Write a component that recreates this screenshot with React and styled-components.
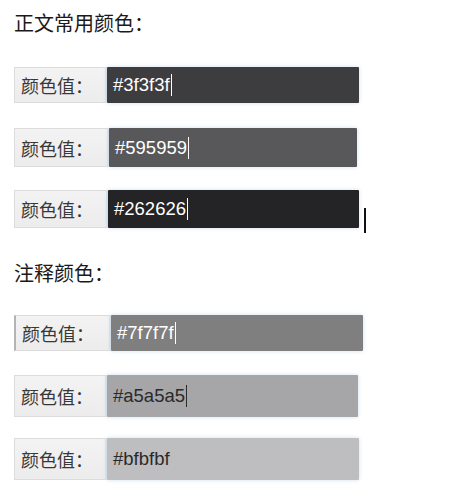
import React from "react";
import styled, { createGlobalStyle } from "styled-components";

const Global = createGlobalStyle`
  html, body { margin: 0; padding: 0; background: #ffffff; }
  body { font-family: "Noto Sans CJK SC", "Microsoft YaHei", sans-serif; }
`;

const Page = styled.div`
  width: 473px;
  height: 501px;
  padding-left: 14px;
  box-sizing: border-box;
  display: flex;
  flex-direction: column;
  overflow: hidden;
`;

const Heading = styled.h3`
  margin: ${(p) => p.$mt}px 0 0 0;
  height: 24px;
  line-height: 24px;
  font-size: 20px;
  font-weight: 400;
  color: #1a1a1a;
`;

const Row = styled.div`
  display: flex;
  align-items: stretch;
  margin-top: ${(p) => p.$mt}px;
  height: ${(p) => p.$h}px;
`;

const Label = styled.span`
  width: ${(p) => p.$w}px;
  box-sizing: border-box;
  display: flex;
  align-items: center;
  padding-left: 6px;
  background: linear-gradient(#f3f3f3, #ececec);
  border: 1px solid #dcdcdc;
  border-left: ${(p) => (p.$strong ? "2px solid #b4b4b4" : "1px solid #dcdcdc")};
  border-right: 2px solid #dfe6ee;
  font-size: 18px;
  color: #383838;
`;

const Field = styled.span`
  width: ${(p) => p.$w}px;
  box-sizing: border-box;
  display: flex;
  align-items: center;
  padding-left: 6px;
  background: ${(p) => p.$bg};
  color: ${(p) => p.$fg};
  font-family: "Liberation Sans", Arial, sans-serif;
  font-size: 18.5px;
  box-shadow: 0 0 4px rgba(150, 185, 215, 0.45);
  border-radius: 1px;
`;

const Caret = styled.span`
  display: inline-block;
  width: 1px;
  height: 22px;
  margin-left: 1px;
  background: ${(p) => p.$c};
`;

const Beam = styled.span`
  align-self: flex-end;
  width: 2px;
  height: 25px;
  margin-left: 5px;
  margin-bottom: -5px;
  background: #111111;
`;

const body = [
  { mt: 32, h: 36, lw: 93, fw: 252, bg: "#3d3d3f", fg: "#ffffff", text: "#3f3f3f", caret: "#ffffff" },
  { mt: 25, h: 39, lw: 95, fw: 248, bg: "#58585a", fg: "#ffffff", text: "#595959", caret: "#ffffff" },
  { mt: 23, h: 38, lw: 94, fw: 251, bg: "#242426", fg: "#ffffff", text: "#262626", caret: "#ffffff", beam: true },
];

const notes = [
  { mt: 30, h: 36, lw: 97, fw: 252, bg: "#7f7f80", fg: "#ffffff", text: "#7f7f7f", caret: "#ffffff", strong: true },
  { mt: 24, h: 42, lw: 93, fw: 251, bg: "#a6a5a8", fg: "#2a2a2a", text: "#a5a5a5", caret: "#2a2a2a" },
  { mt: 21, h: 42, lw: 93, fw: 252, bg: "#bebdbf", fg: "#2a2a2a", text: "#bfbfbf" },
];

function ColorRow({ r }) {
  return (
    <Row $mt={r.mt} $h={r.h}>
      <Label $w={r.lw} $strong={r.strong}>颜色值：</Label>
      <Field $w={r.fw} $bg={r.bg} $fg={r.fg}>
        {r.text}
        {r.caret && <Caret $c={r.caret} />}
      </Field>
      {r.beam && <Beam />}
    </Row>
  );
}

export default function App() {
  return (
    <Page>
      <Global />
      <Heading $mt={11}>正文常用颜色：</Heading>
      {body.map((r) => (
        <ColorRow key={r.text} r={r} />
      ))}
      <Heading $mt={33}>注释颜色：</Heading>
      {notes.map((r) => (
        <ColorRow key={r.text} r={r} />
      ))}
    </Page>
  );
}
